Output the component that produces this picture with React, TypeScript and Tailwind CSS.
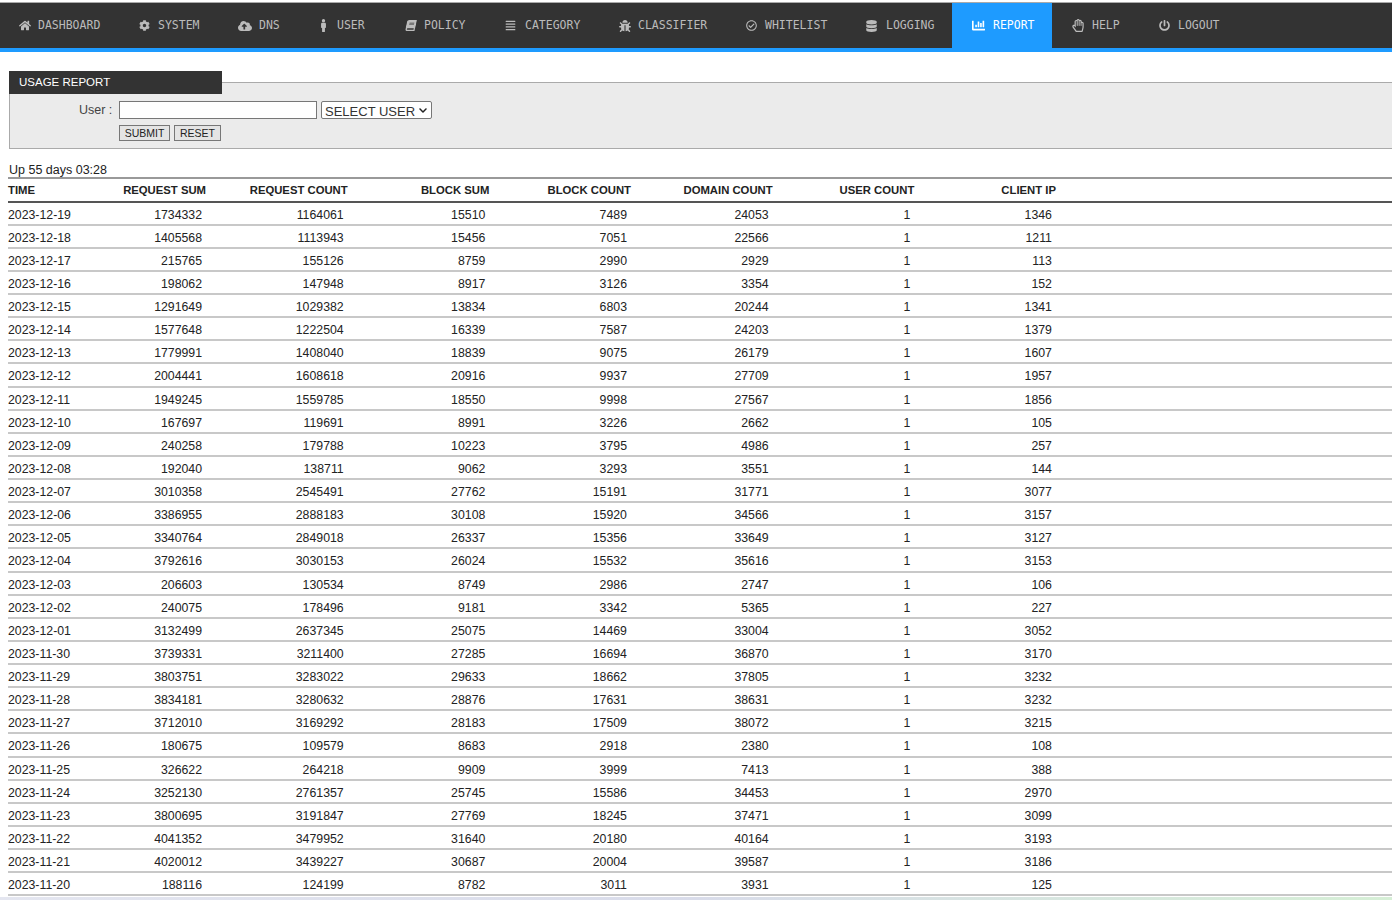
import {
  FaHome, FaCog, FaCloudUploadAlt, FaMale, FaBook, FaAlignJustify, FaBug,
  FaRegCheckCircle, FaDatabase, FaChartBar, FaRegHandPaper, FaPowerOff, FaChevronDown,
} from 'react-icons/fa'

const NAV = [
  { label: 'DASHBOARD', icon: FaHome, w: 'w-[119px]', pad: 'pl-[19px]', box: 'w-[12px]', gap: 'gap-[7px]', size: 'h-[11px] w-[12px]' },
  { label: 'SYSTEM', icon: FaCog, w: 'w-[99px]', pad: 'pl-[20px]', box: 'w-[11px]', gap: 'gap-[8px]', size: 'h-[11px] w-[11px]' },
  { label: 'DNS', icon: FaCloudUploadAlt, w: 'w-[80px]', pad: 'pl-[20px]', box: 'w-[14px]', gap: 'gap-[7px]', size: 'h-[14px] w-[14px]' },
  { label: 'USER', icon: FaMale, w: 'w-[87px]', pad: 'pl-[20px]', box: 'w-[11px]', gap: 'gap-[8px]', size: 'h-[13px] w-[13px]' },
  { label: 'POLICY', icon: FaBook, w: 'w-[100px]', pad: 'pl-[20px]', box: 'w-[11px]', gap: 'gap-[8px]', size: 'h-[11px] w-[10px] -skew-x-12' },
  { label: 'CATEGORY', icon: FaAlignJustify, w: 'w-[114px]', pad: 'pl-[20px]', box: 'w-[11px]', gap: 'gap-[9px]', size: 'h-[11px] w-[11px]' },
  { label: 'CLASSIFIER', icon: FaBug, w: 'w-[127px]', pad: 'pl-[20px]', box: 'w-[11px]', gap: 'gap-[8px]', size: 'h-[12px] w-[12px]' },
  { label: 'WHITELIST', icon: FaRegCheckCircle, w: 'w-[120px]', pad: 'pl-[20px]', box: 'w-[11px]', gap: 'gap-[8px]', size: 'h-[11px] w-[11px]' },
  { label: 'LOGGING', icon: FaDatabase, w: 'w-[106px]', pad: 'pl-[20px]', box: 'w-[11px]', gap: 'gap-[9px]', size: 'h-[12px] w-[11px]' },
  { label: 'REPORT', icon: FaChartBar, w: 'w-[100px]', pad: 'pl-[20px]', box: 'w-[13px]', gap: 'gap-[8px]', size: 'h-[13px] w-[13px]', active: true },
  { label: 'HELP', icon: FaRegHandPaper, w: 'w-[87px]', pad: 'pl-[20px]', box: 'w-[12px]', gap: 'gap-[8px]', size: 'h-[13px] w-[12px]' },
  { label: 'LOGOUT', icon: FaPowerOff, w: 'w-[100px]', pad: 'pl-[20px]', box: 'w-[11px]', gap: 'gap-[8px]', size: 'h-[11px] w-[11px]' },
]

const HEAD = ['REQUEST SUM', 'REQUEST COUNT', 'BLOCK SUM', 'BLOCK COUNT', 'DOMAIN COUNT', 'USER COUNT', 'CLIENT IP']

const ROWS = [
  ['2023-12-19', '1734332', '1164061', '15510', '7489', '24053', '1', '1346'],
  ['2023-12-18', '1405568', '1113943', '15456', '7051', '22566', '1', '1211'],
  ['2023-12-17', '215765', '155126', '8759', '2990', '2929', '1', '113'],
  ['2023-12-16', '198062', '147948', '8917', '3126', '3354', '1', '152'],
  ['2023-12-15', '1291649', '1029382', '13834', '6803', '20244', '1', '1341'],
  ['2023-12-14', '1577648', '1222504', '16339', '7587', '24203', '1', '1379'],
  ['2023-12-13', '1779991', '1408040', '18839', '9075', '26179', '1', '1607'],
  ['2023-12-12', '2004441', '1608618', '20916', '9937', '27709', '1', '1957'],
  ['2023-12-11', '1949245', '1559785', '18550', '9998', '27567', '1', '1856'],
  ['2023-12-10', '167697', '119691', '8991', '3226', '2662', '1', '105'],
  ['2023-12-09', '240258', '179788', '10223', '3795', '4986', '1', '257'],
  ['2023-12-08', '192040', '138711', '9062', '3293', '3551', '1', '144'],
  ['2023-12-07', '3010358', '2545491', '27762', '15191', '31771', '1', '3077'],
  ['2023-12-06', '3386955', '2888183', '30108', '15920', '34566', '1', '3157'],
  ['2023-12-05', '3340764', '2849018', '26337', '15356', '33649', '1', '3127'],
  ['2023-12-04', '3792616', '3030153', '26024', '15532', '35616', '1', '3153'],
  ['2023-12-03', '206603', '130534', '8749', '2986', '2747', '1', '106'],
  ['2023-12-02', '240075', '178496', '9181', '3342', '5365', '1', '227'],
  ['2023-12-01', '3132499', '2637345', '25075', '14469', '33004', '1', '3052'],
  ['2023-11-30', '3739331', '3211400', '27285', '16694', '36870', '1', '3170'],
  ['2023-11-29', '3803751', '3283022', '29633', '18662', '37805', '1', '3232'],
  ['2023-11-28', '3834181', '3280632', '28876', '17631', '38631', '1', '3232'],
  ['2023-11-27', '3712010', '3169292', '28183', '17509', '38072', '1', '3215'],
  ['2023-11-26', '180675', '109579', '8683', '2918', '2380', '1', '108'],
  ['2023-11-25', '326622', '264218', '9909', '3999', '7413', '1', '388'],
  ['2023-11-24', '3252130', '2761357', '25745', '15586', '34453', '1', '2970'],
  ['2023-11-23', '3800695', '3191847', '27769', '18245', '37471', '1', '3099'],
  ['2023-11-22', '4041352', '3479952', '31640', '20180', '40164', '1', '3193'],
  ['2023-11-21', '4020012', '3439227', '30687', '20004', '39587', '1', '3186'],
  ['2023-11-20', '188116', '124199', '8782', '3011', '3931', '1', '125'],
]

const COLS = 'grid grid-cols-[64px_134px_repeat(6,141.67px)]'

export default function App() {
  return (
    <div className="h-[900px] overflow-hidden bg-white font-['Liberation_Sans',Arial,sans-serif] text-[#222]">
      {/* Nav */}
      <nav className="mt-[2px] flex h-[50px] border-t border-b-[4px] border-t-[#aaa] border-b-[#1e9bff] bg-[#333]">
        {NAV.map((item) => (
          <div
            key={item.label}
            className={`flex h-[45px] shrink-0 items-center ${item.w} ${item.pad} ${item.gap} ${item.active ? 'bg-[#1e9bff] text-white' : 'text-[#bbb]'}`}
          >
            <span className={`flex shrink-0 justify-center ${item.box}`}>
              <item.icon className={`shrink-0 ${item.size}`} />
            </span>
            <span className="font-['DejaVu_Sans_Mono',monospace] text-[11.5px]">{item.label}</span>
          </div>
        ))}
      </nav>

      {/* Form */}
      <div className="relative ml-[9px] mt-[30px] h-[67px] border border-r-0 border-[#aaa] bg-[#ebebeb]">
        <div className="absolute left-[-1px] top-[-12px] flex h-[23px] w-[213px] items-center bg-[#333] pl-[10px] text-[11.5px] text-white">
          USAGE REPORT
        </div>
        <div className="flex items-center pl-[69px] pt-[18px]">
          <span className="w-[40px] text-[12.5px] text-[#444]">User :</span>
          <input className="h-[18px] w-[198px] border border-[#777] bg-white" />
          <div className="relative ml-[4px]">
            <select className="block h-[18px] w-[111px] appearance-none rounded-[2px] border border-[#777] bg-white pb-[2px] pl-[3px] text-[13px] text-[#333]">
              <option>SELECT USER</option>
            </select>
            <FaChevronDown className="pointer-events-none absolute right-[4px] top-[5px] h-[9px] w-[10px] text-[#222]" />
          </div>
        </div>
        <div className="flex gap-[4px] pl-[109px] pt-[5px]">
          <button className="h-[16px] w-[51px] border border-[#777] bg-[#e4e4e4] text-[10.5px] leading-none">SUBMIT</button>
          <button className="h-[16px] w-[47px] border border-[#777] bg-[#e4e4e4] text-[10.5px] leading-none">RESET</button>
        </div>
      </div>

      <p className="ml-[9px] mt-[13px] h-[16px] text-[12.5px] leading-[16px]">Up 55 days 03:28</p>

      {/* Table */}
      <div className="ml-[8px] -mt-[1px] text-[12.3px]">
        <div className={`${COLS} h-[25.5px] items-center border-y-2 border-t-[#999] border-b-[#555] pt-[1px] text-[11.3px] font-bold`}>
          <span>TIME</span>
          {HEAD.map((h) => (
            <span key={h} className="text-right">{h}</span>
          ))}
        </div>
        {ROWS.map((row) => (
          <div key={row[0]} className={`${COLS} h-[23.13px] items-center border-b-2 border-[#c8c8c8] pt-[3px]`}>
            {row.map((v, i) => (
              <span key={i} className={i === 0 ? '' : 'pr-[4px] text-right'}>{v}</span>
            ))}
          </div>
        ))}
      </div>

      {/* desktop showing below the page */}
      <div className="mt-[1px] h-[6px] bg-gradient-to-r from-[#e4e6f0] via-[#d9dcea] to-[#d6efd6]" />
    </div>
  )
}
